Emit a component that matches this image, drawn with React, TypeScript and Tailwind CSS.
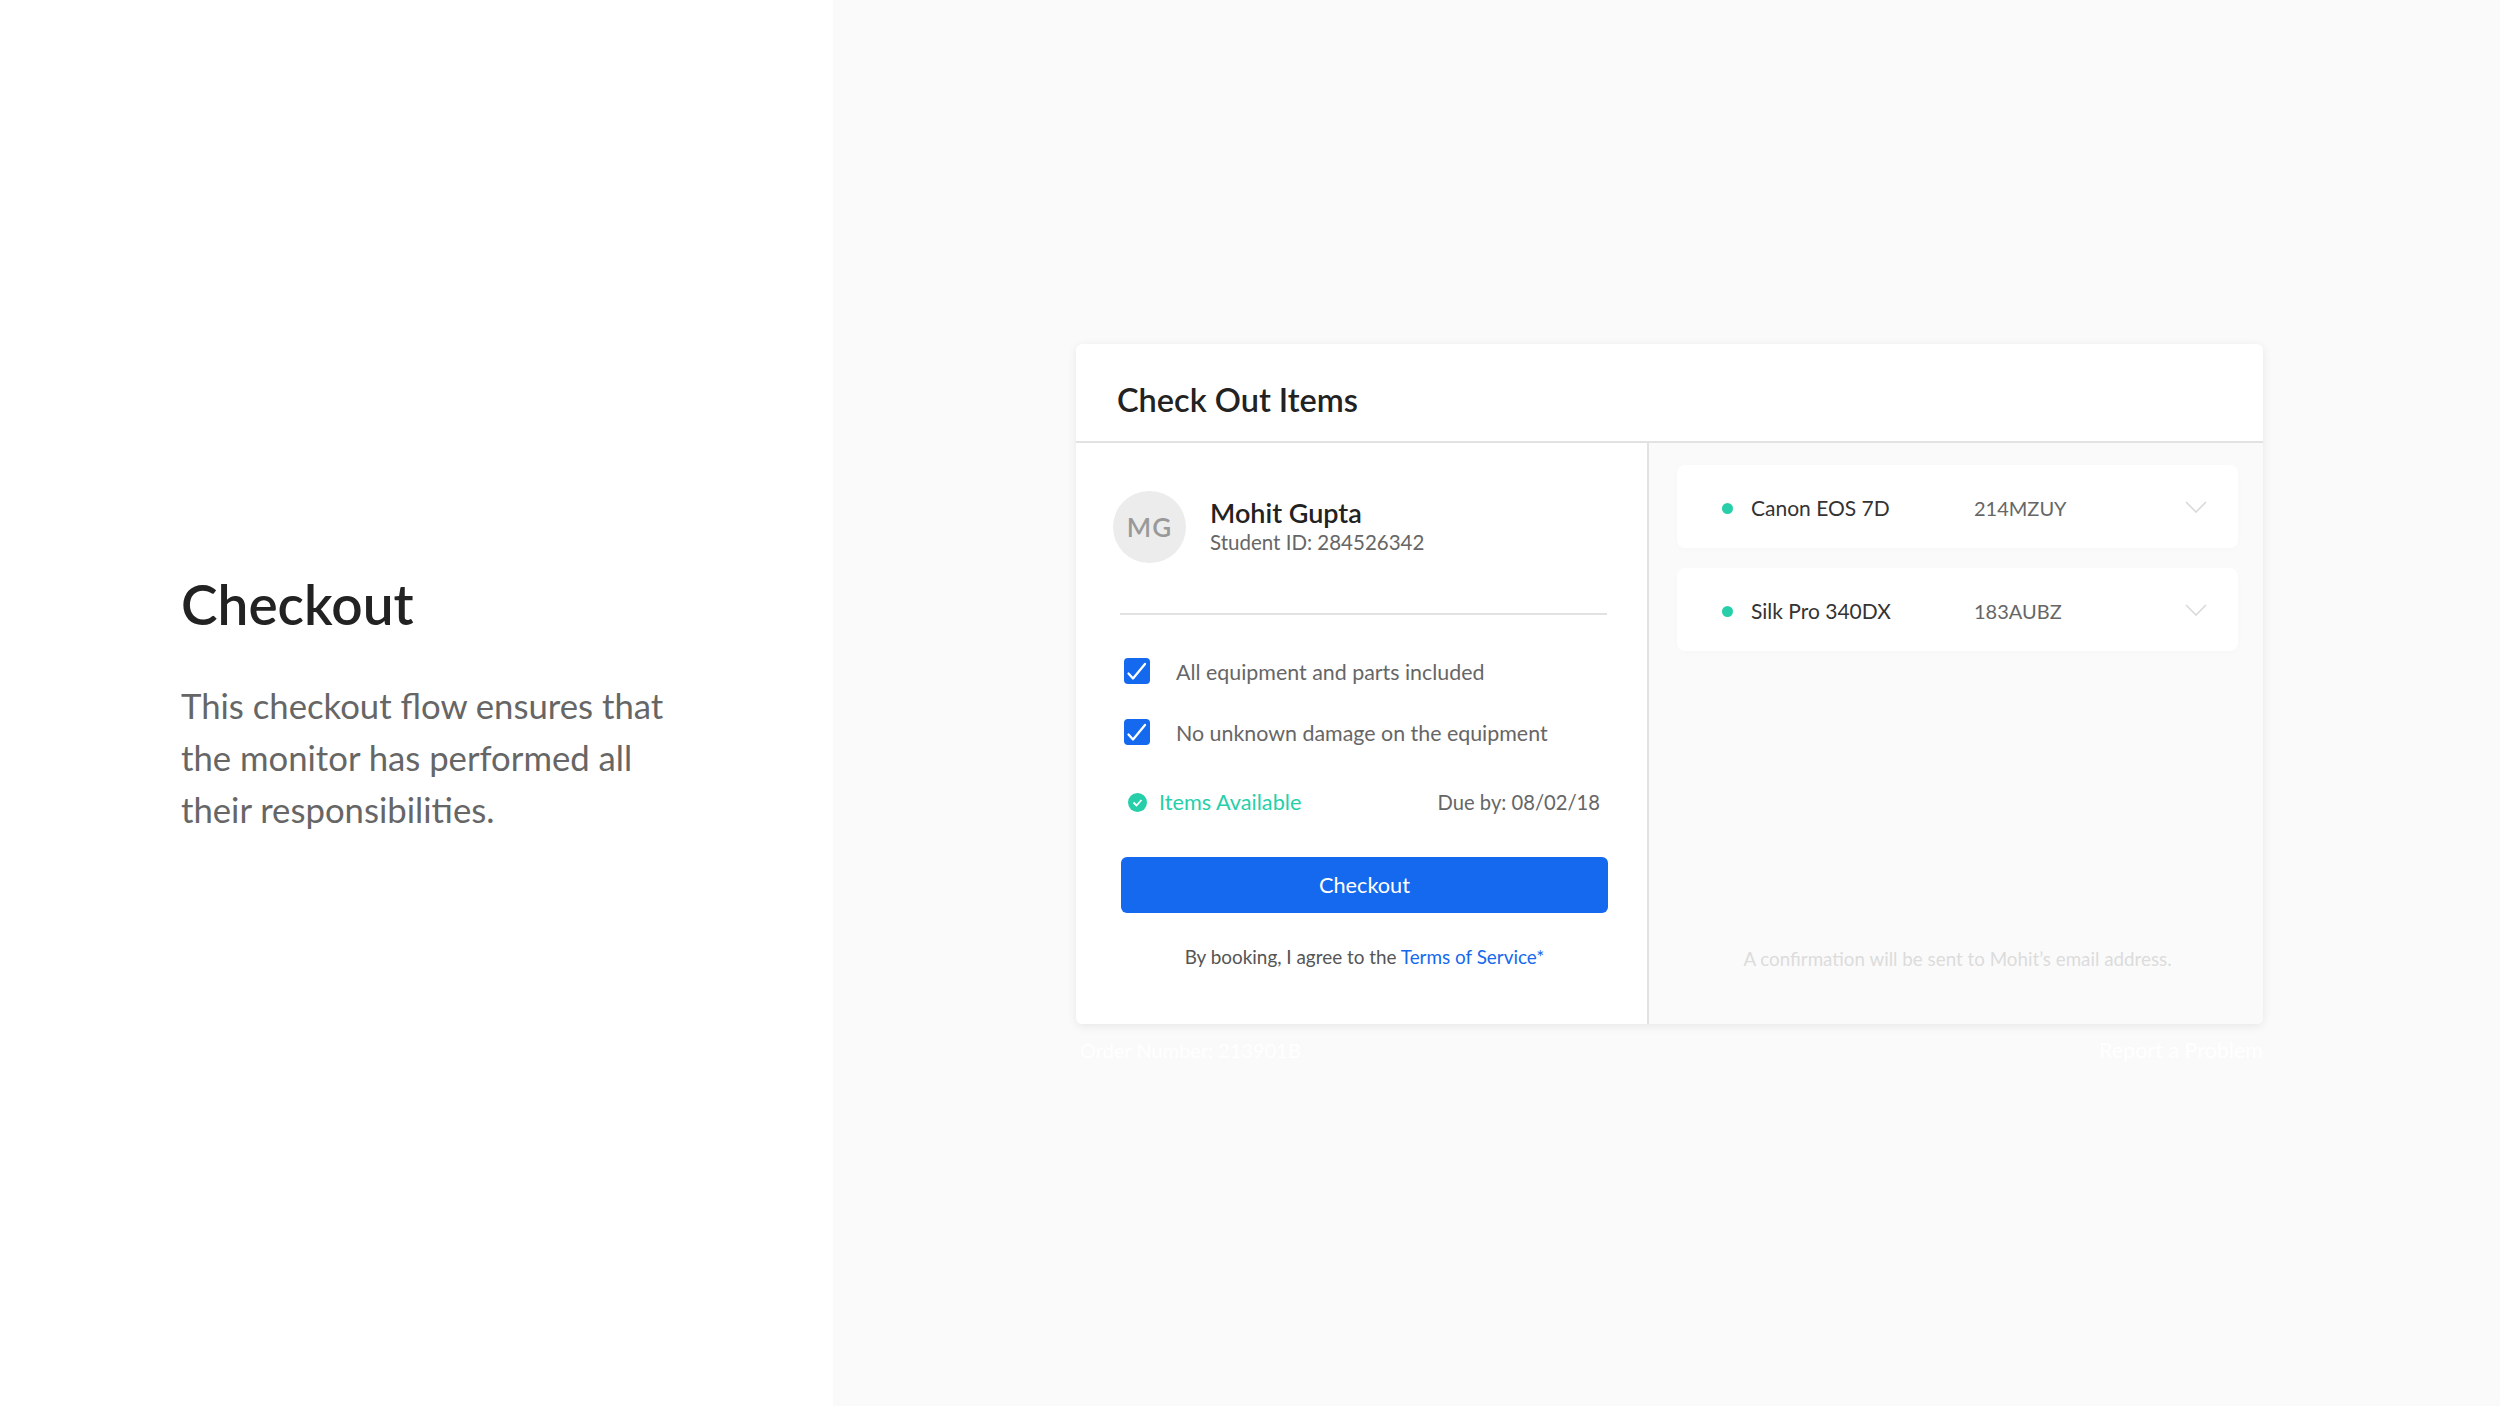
import React from "react";

function Checkbox() {
  return (
    <span className="flex h-[26px] w-[26px] shrink-0 items-center justify-center rounded-[4px] bg-[#1469ee]">
      <svg width="26" height="26" viewBox="0 0 26 26" fill="none">
        <path d="M4.5 15.5 L9 20.5 L21 6" stroke="#fff" strokeWidth="2.3" strokeLinecap="round" strokeLinejoin="round" />
      </svg>
    </span>
  );
}

function Item({ name, code }: { name: string; code: string }) {
  return (
    <div className="flex h-[83px] items-center rounded-[8px] bg-white pl-[45px] pr-[31px] pt-[4px] shadow-[0_2px_8px_rgba(0,0,0,0.015)]">
      <span className="h-[11px] w-[11px] shrink-0 rounded-full bg-[#26cfa9]" />
      <span className="-mt-[2px] ml-[18px] w-[223px] text-[21px] text-[#333]">{name}</span>
      <span className="-mt-[2px] flex-1 text-[20px] text-[#666]">{code}</span>
      <svg className="-mt-[4px]" width="22" height="12" viewBox="0 0 22 12" fill="none">
        <path d="M1 1 L11 11 L21 1" stroke="#d9d9d9" strokeWidth="1.6" />
      </svg>
    </div>
  );
}

export default function App() {
  return (
    <div className="flex h-[1406px] w-[2500px] overflow-hidden bg-white font-['Lato','Liberation_Sans',sans-serif]">
      <div className="flex w-[833px] shrink-0 flex-col pl-[181px] pt-[571px]">
        <h1 className="text-[55px] font-semibold leading-[66px] text-[#222]">Checkout</h1>
        <p className="mt-[43px] w-[520px] text-[34.7px] leading-[52px] text-[#666]">
          This checkout flow ensures that
          <br />
          the monitor has performed all
          <br />
          their responsibilities.
        </p>
      </div>

      <div className="flex-1 bg-[#fafafa] pl-[243px] pt-[344px]">
        <div className="w-[1187px]">
          <div className="overflow-hidden rounded-[6px] bg-white shadow-[0_2px_10px_rgba(0,0,0,0.08)]">
            <div className="flex h-[99px] items-center border-b-2 border-[#e2e2e2] pl-[41px] pt-[16px]">
              <h2 className="text-[32.5px] font-semibold text-[#222]">Check Out Items</h2>
            </div>
            <div className="flex h-[581px]">
              <div className="w-[573px] shrink-0 border-r-2 border-[#e2e2e2] pl-[37px] pt-[48px]">
                <div className="flex items-center">
                  <div className="flex h-[72px] w-[73px] items-center justify-center rounded-full bg-[#ececec] text-[26px] font-semibold tracking-[1px] text-[#999]">
                    MG
                  </div>
                  <div className="ml-[24px] flex flex-col">
                    <span className="text-[27px] font-semibold leading-[26px] text-[#222]">Mohit Gupta</span>
                    <span className="mt-[3px] text-[20.5px] leading-[26px] text-[#666]">Student ID: 284526342</span>
                  </div>
                </div>
                <div className="ml-[7px] mt-[50px] h-[2px] w-[487px] bg-[#e2e2e2]" />
                <div className="ml-[11px] mt-[43px] flex h-[26px] items-center">
                  <Checkbox />
                  <span className="ml-[26px] pt-[2px] text-[21.4px] leading-[26px] text-[#666]">All equipment and parts included</span>
                </div>
                <div className="ml-[11px] mt-[35px] flex h-[26px] items-center">
                  <Checkbox />
                  <span className="ml-[26px] pt-[2px] text-[21.4px] leading-[26px] text-[#666]">No unknown damage on the equipment</span>
                </div>
                <div className="ml-[15px] mt-[44px] flex h-[26px] w-[472px] items-center justify-between">
                  <div className="flex items-center">
                    <svg width="19" height="19" viewBox="0 0 19 19">
                      <circle cx="9.5" cy="9.5" r="9.5" fill="#26cfa9" />
                      <path d="M5.5 9.5 L8.5 12.5 L13.5 7" stroke="#fff" strokeWidth="1.8" fill="none" />
                    </svg>
                    <span className="ml-[12px] text-[21.7px] leading-[26px] text-[#26cfa9]">Items Available</span>
                  </div>
                  <span className="text-[20.2px] leading-[26px] text-[#666]">Due by: 08/02/18</span>
                </div>
                <button className="ml-[8px] mt-[42px] flex h-[56px] w-[487px] items-center justify-center rounded-[6px] bg-[#1469ee] text-[21.7px] text-white">
                  Checkout
                </button>
                <p className="ml-[8px] mt-[32px] w-[487px] text-center text-[18.9px] leading-[24px] text-[#555]">
                  By booking, I agree to the <span className="text-[#1469ee]">Terms of Service*</span>
                </p>
              </div>
              <div className="flex flex-1 flex-col bg-[#fafafa] pl-[28px] pr-[25px] pt-[22px]">
                <div className="flex flex-col gap-[20px]">
                  <Item name="Canon EOS 7D" code="214MZUY" />
                  <Item name="Silk Pro 340DX" code="183AUBZ" />
                </div>
                <p className="mt-[294px] text-center text-[18.8px] leading-[28px] text-[#dcdcdc]">
                  A confirmation will be sent to Mohit’s email address.
                </p>
              </div>
            </div>
          </div>
          <div className="mt-[12px] flex items-center justify-between pl-[4px] leading-[28px] text-white">
            <span className="text-[20px]">Order Number: 213901B</span>
            <span className="text-[21.5px]">Report a Problem</span>
          </div>
        </div>
      </div>
    </div>
  );
}
